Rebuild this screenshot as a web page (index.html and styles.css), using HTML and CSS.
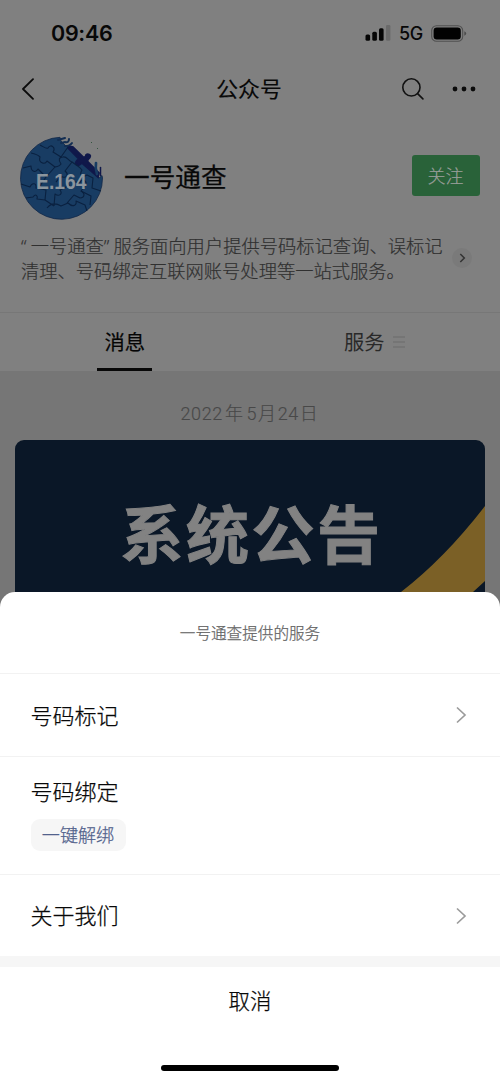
FILE: index.html
```html
<!DOCTYPE html>
<html lang="zh-CN">
<head>
<meta charset="utf-8">
<title>公众号</title>
<link rel="stylesheet" href="styles.css">
</head>
<body>
<div class="phone">
  <header class="status">
    <span class="clock">09:46</span>
    <svg class="signal" width="26" height="16" viewBox="0 0 26 16"><g fill="#050505"><rect x="0.5" y="9.5" width="4.6" height="6.2" rx="1.5"/><rect x="7.3" y="6.7" width="4.6" height="9" rx="1.5"/><rect x="14" y="3.2" width="4.6" height="12.5" rx="1.5"/></g><rect x="21" width="4.4" height="15.7" rx="1.2" fill="#6a6a6a"/></svg>
    <span class="network">5G</span>
    <svg class="battery" width="36" height="17" viewBox="0 0 36 17"><rect x=".7" y=".7" width="31" height="15.6" rx="4.8" fill="none" stroke="#505050" stroke-width="1.1"/><rect x="2.6" y="2.6" width="27.2" height="11.8" rx="3.2" fill="#020202"/><path d="M33.3 6.2q1.9.8 1.9 2.3t-1.9 2.3z" fill="#4c4c4c"/></svg>
  </header>
  <nav class="nav">
    <svg class="back" width="14" height="22" viewBox="0 0 14 22"><path d="M12 1.2 2 11l10 9.8" fill="none" stroke="#0b0b0b" stroke-width="1.8" stroke-linecap="round" stroke-linejoin="round"/></svg>
    <h1>公众号</h1>
    <svg class="search" width="22" height="22" viewBox="0 0 22 22"><g fill="none" stroke="#111" stroke-width="1.6" stroke-linecap="round"><circle cx="9.4" cy="9.4" r="8.6"/><path d="m15.6 15.6 5.3 5.3"/></g></svg>
    <svg class="more" width="24" height="6" viewBox="0 0 24 6"><g fill="#0b0b0b"><circle cx="3" cy="3" r="2.4"/><circle cx="12" cy="3" r="2.4"/><circle cx="21" cy="3" r="2.4"/></g></svg>
  </nav>
  <section class="profile">
    <div class="identity">
      <svg class="logo" width="84" height="84" viewBox="0 0 84 84">
        <path d="M40 1.3A41 41 0 1 0 82.5 42L82 39.5 79 42 48 12 41 5Z" fill="#183c63" stroke="#112747" stroke-width=".8"/>
        <path d="m48 10 5 1 10 10c2 1 3-1 3-2 2-2 5 0 4 2s-4 3-2 5l11 11-1 4-16-14c-2 1-2 3-5 2-3-2 0-5 2-6L48 12Z" fill="#10184a" stroke="#10184a" stroke-width="1.8"/>
        <g fill="none" stroke-linecap="round">
          <path d="m38 4 7-2M41 7l4-1q4 1 4-3M45 10q5 0 7-3" stroke="#122d52" stroke-width="2"/>
          <path d="M76 27q-1 5 1 11" stroke="#183c63" stroke-width="2.7"/>
          <path d="M80.5 31.5v8" stroke="#10184a" stroke-width="1.5"/>
        </g>
        <g fill="none" stroke="#0a2140" stroke-width="1.1" stroke-linejoin="round">
          <path d="M11 17c5 1 8 3 9 4-2 6 5 8 7 4l8 6-9 10M20 9c4 2 6 4 8 3 3-5 8 0 5 4l8 5 7-10"/>
          <path d="M35 31c3-1 4 0 6-3-3-4-2-7 2-7 4-1 5 4 9 5l-7 9c4 3 2 7-2 6-4-1-4 2-7 5"/>
          <path d="M3 32l8-2c0 6 5 7 7 3l8 8-6 9M1 48l9 3c2-5 7-4 6 1l10 2-1 10 9 6M6 62l7-1c3-4 5-1 4 2l8 1"/>
          <path d="M52 26c5 4 7 4 10 8-3 5 0 8 5 5l6 3-1 10 9 3M51 45l9 2c1-5 7-3 6 2l-5 6c5 3 3 7-1 7l-6-3-7 8"/>
          <path d="M27 72c4-5 9-5 14-2l7-3c5 5 9 2 8-2l9 4 2 6M34 70l1-12c4 3 8 0 5-4l10-5M61 55l10 5-1 9"/>
        </g>
        <text x="16" y="53.3" class="logo-text" textLength="50.5" lengthAdjust="spacingAndGlyphs">E.164</text>
        <path d="m71 6 1 1m5 5 1 1" stroke="#355540"/>
      </svg>
      <h2>一号通查</h2>
      <button class="follow">关注</button>
    </div>
    <div class="about">
      <p><i>“</i>一号通查<i>”</i>服务面向用户提供号码标记查询、误标记<br>清理、号码绑定互联网账号处理等一站式服务。</p>
      <span class="expand"><svg width="7" height="10" viewBox="0 0 7 10"><path d="m1.3 1 4 4-4 4" fill="none" stroke="#333" stroke-width="1.5"/></svg></span>
    </div>
  </section>
  <div class="tabs">
    <div class="tab active"><span>消息</span></div>
    <div class="tab"><span>服务</span><svg width="12" height="12" viewBox="0 0 12 12"><path d="M0 1h12M0 6h12M0 11h12" stroke="#6b6b6b" stroke-width="1.2"/></svg></div>
  </div>
  <main class="feed">
    <time>2022<b>年</b>5<b class="tight">月</b>24<b class="tight">日</b></time>
    <div class="banner">
      <svg class="ribbon" width="84" height="86" viewBox="0 0 84 86"><path d="M84 0V75L72 86H0Q44 52 84 0Z" fill="#7b6026"/></svg>
      <strong>系统公告</strong>
    </div>
  </main>
  <section class="sheet">
    <div class="sheet-title">一号通查提供的服务</div>
    <div class="row"><span>号码标记</span><svg width="12" height="18" viewBox="0 0 12 18"><path d="m2 1.5 8 7.5-8 7.5" fill="none" stroke="#9b9b9b" stroke-width="1.7"/></svg></div>
    <div class="row bind"><span>号码绑定</span><button class="chip">一键解绑</button></div>
    <div class="row last"><span>关于我们</span><svg width="12" height="18" viewBox="0 0 12 18"><path d="m2 1.5 8 7.5-8 7.5" fill="none" stroke="#9b9b9b" stroke-width="1.7"/></svg></div>
    <div class="cancel">取消</div>
    <div class="home"></div>
  </section>
</div>
</body>
</html>
```
FILE: styles.css
```css
* { box-sizing: border-box; }
body { margin: 0; font-family: "Noto Sans CJK SC", sans-serif; font-weight: 300; }
h1, h2, p { margin: 0; font-weight: 400; }
button { border: 0; padding: 0; font-family: inherit; font-weight: inherit; }
svg { display: block; flex: none; }
.phone { width: 500px; height: 1082px; overflow: hidden; display: flex; flex-direction: column; background: #808080; color: #080808; }

.status { height: 60px; flex: none; display: flex; align-items: center; padding: 6px 33px 0 51px; font-family: Inter, sans-serif; }
.clock { flex: 1; font-size: 21.5px; font-weight: 600; letter-spacing: -.3px; }
.signal { margin-right: 8px; }
.network { width: 24px; font-size: 18px; font-weight: 500; letter-spacing: -.3px; margin-right: 8px; white-space: nowrap; }

.nav { height: 57px; flex: none; display: flex; align-items: center; padding: 0 24px 0 21px; }
.nav h1 { flex: 1; font-size: 21.8px; line-height: 30px; text-align: center; padding: 0 0 1px 61px; -webkit-text-stroke: .15px; }
.search { margin-right: 28px; }

.profile { height: 196px; flex: none; border-bottom: 1px solid #777; }
.identity { height: 116px; display: flex; align-items: center; padding: 4px 20.5px 0 20px; }
.logo { margin-top: 1px; }
.logo-text { font: bold 22.5px "Liberation Sans", sans-serif; fill: #8b959e; }
.identity h2 { flex: 1; margin-left: 20px; font-size: 25.7px; line-height: 40px; padding-bottom: 3px; -webkit-text-stroke: .25px; }
.follow { width: 68px; height: 41px; margin-top: -3px; padding-bottom: 1px; border-radius: 3px; background: #296239; color: #9a9f9b; font-size: 18px; -webkit-text-stroke: .2px; }
.about { display: flex; align-items: center; padding-left: 21px; }
.about p { width: 431px; height: 51px; font-size: 18.3px; font-weight: 300; line-height: 25px; color: #303030; white-space: nowrap; -webkit-text-stroke: .2px; }
.about i { display: inline-block; width: 9.7px; font-style: normal; font-family: "Open Sans", sans-serif; line-height: 20px; }
.expand { width: 20px; height: 20px; border-radius: 50%; background: #7a7a7a; display: flex; align-items: center; justify-content: center; margin-top: -2px; }

.tabs { height: 58px; flex: none; display: flex; }
.tab { flex: 1; display: flex; align-items: center; justify-content: center; gap: 8px; font-size: 20.3px; font-weight: 400; color: #292929; padding-right: 1px; }
.tab span { line-height: 30px; padding-bottom: 2px; }
.tab.active { color: #050505; padding: 0; -webkit-text-stroke: .2px; }
.tab.active span { width: 55px; height: 58px; line-height: 56px; padding: 0; text-align: center; border-bottom: 3px solid #080808; }

.feed { flex: 1; background: #767676; display: flex; flex-direction: column; padding: 0 15px; }
.feed time { height: 69px; line-height: 85px; text-align: center; font-size: 18px; letter-spacing: .6px; color: #484848; font-family: Roboto, "Noto Sans CJK SC", sans-serif; -webkit-text-stroke: .15px; }
.feed b { font-weight: 300; margin: 0 3px 0 2px; }
.feed .tight { margin: 0 1px; }
.banner { height: 172px; flex: none; position: relative; overflow: hidden; border-radius: 9px; background: #0a1727; text-align: center; }
.banner strong { position: relative; display: block; font-size: 63px; line-height: 182px; padding-left: 3px; font-weight: 700; letter-spacing: 2.5px; color: #828282; -webkit-text-stroke: 1px; }
.ribbon { position: absolute; right: 0; top: 66px; }

.sheet { height: 490px; flex: none; border-radius: 15px 15px 0 0; background: #fff; margin-top: -20px; position: relative; color: #080808; display: flex; flex-direction: column; -webkit-text-stroke: .25px; }
.sheet-title { height: 82px; line-height: 80px; text-align: center; font-size: 15.6px; color: #666; border-bottom: 1px solid #f2f2f2; }
.row { height: 83px; display: flex; align-items: center; justify-content: space-between; padding: 0 33px 0 30.5px; font-size: 22px; border-bottom: 1px solid #f2f2f2; }
.row span { line-height: 34px; padding-bottom: 3px; }
.bind { height: 118px; flex-direction: column; align-items: flex-start; justify-content: flex-start; padding-top: 16px; }
.bind span { padding: 0; }
.chip { width: 95px; height: 32px; margin-top: 12px; padding-bottom: 2px; border-radius: 9px; background: #f6f6f6; color: #52628c; font-size: 18.1px; }
.last { height: 92px; border-bottom: 11px solid #f6f6f6; }
.cancel { height: 70px; line-height: 66px; text-align: center; font-size: 21.5px; }
.home { width: 178px; height: 6px; margin: 28px auto 0; border-radius: 3px; background: #000; }
```
